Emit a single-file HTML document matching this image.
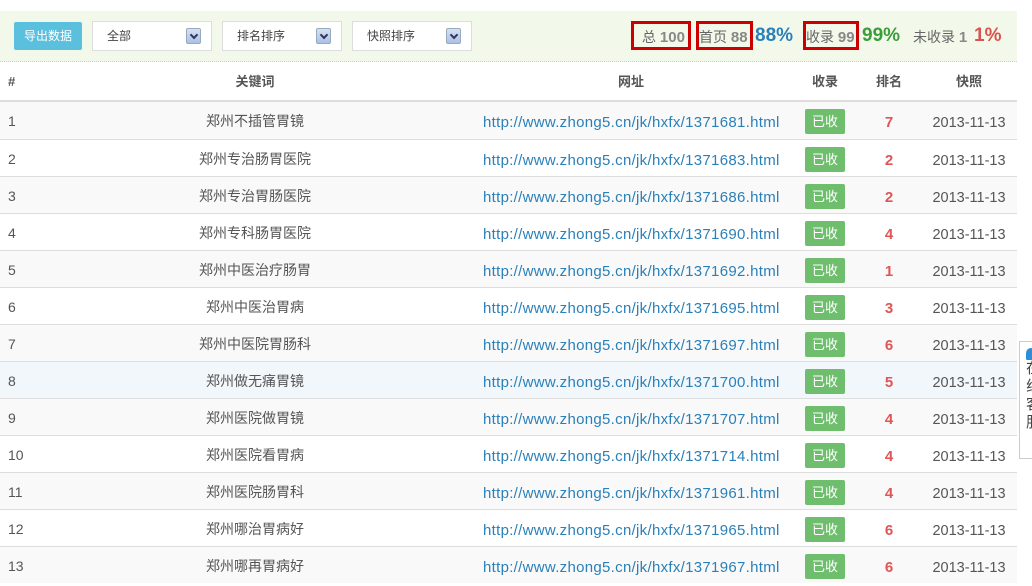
<!DOCTYPE html>
<html><head><meta charset="utf-8"><style>
*{margin:0;padding:0;box-sizing:border-box}
body{width:1032px;height:562px;overflow:hidden;background:#fff;font-family:"Liberation Sans","Noto Sans CJK SC",sans-serif;font-size:14px;color:#555;position:relative}
.bar{position:absolute;left:0;top:11px;width:1017px;height:51px;background:#f3f9ea;border-bottom:1px dotted #ccc}
.btn{position:absolute;left:14px;top:22px;width:68px;height:28px;background:#5bc0de;color:#fff;font-size:12px;line-height:28px;text-align:center;border-radius:2px}
.sel{position:absolute;top:21px;height:30px;width:120px;background:#fff;border:1px solid #ddd;font-size:12px;line-height:28px;color:#444}
.sel i{position:absolute;right:10px;top:6px;width:15px;height:16px;background:linear-gradient(#d5e2f6,#a9c0e8);border:1px solid #9ab;border-radius:2px}
.sel i:after{content:"";position:absolute;left:4px;top:3px;width:4px;height:4px;border-right:2px solid #335;border-bottom:2px solid #335;transform:rotate(45deg)}
.box{position:absolute;border:3px solid #c00;height:29px;top:21px}
.st{position:absolute;top:25px;font-size:14px;line-height:24px;color:#666;white-space:nowrap}
.st b{color:#888;font-size:15px}
.pct{position:absolute;top:23px;font-size:19px;line-height:26px;font-weight:bold}
.row{position:absolute;left:0;width:1017px;height:37px;border-top:1px solid #ddd}
.row span{position:absolute;top:1px;display:block;height:36px;line-height:36px}
.c1{left:8px}
.c2{left:140px;width:230px;text-align:center;font-size:14px}
.row .c3{left:483px;top:3px;color:#2a80b9;font-size:15px;letter-spacing:0.3px}
.row .c4{left:805px;top:7px;width:40px;height:25px;line-height:25px;background:#6ebe6e;color:#fff;text-align:center;border-radius:2px;font-size:13px}
.row .c5{left:874px;top:3px;width:30px;text-align:center;color:#e05555;font-weight:bold;font-size:15px}
.row .c6{left:925px;top:3px;width:88px;text-align:center;font-size:14.5px}
.hd{position:absolute;top:62px;left:0;width:1017px;height:40px;border-bottom:2px solid #ddd;font-weight:bold;font-size:13px;line-height:40px}
.hd span{position:absolute}
</style></head><body>
<div class="bar"></div>
<div class="btn">导出数据</div>
<div class="sel" style="left:92px"><span style="margin-left:14px">全部</span><i></i></div>
<div class="sel" style="left:222px"><span style="margin-left:14px">排名排序</span><i></i></div>
<div class="sel" style="left:352px"><span style="margin-left:14px">快照排序</span><i></i></div>
<div class="box" style="left:631px;width:60px"></div>
<div class="box" style="left:696px;width:57px"></div>
<div class="box" style="left:803px;width:56px"></div>
<div class="st" style="left:642px">总 <b>100</b></div>
<div class="st" style="left:699px">首页 <b>88</b></div>
<span class="pct" style="left:755px;color:#2a80b9">88%</span>
<div class="st" style="left:806px">收录 <b>99</b></div>
<span class="pct" style="left:862px;color:#3a9e3a">99%</span>
<div class="st" style="left:913px">未收录 <b>1</b></div>
<span class="pct" style="left:974px;color:#d9534f">1%</span>
<div class="hd"><span style="left:8px">#</span><span style="left:140px;width:230px;text-align:center">关键词</span><span style="left:605px;width:52px;text-align:center">网址</span><span style="left:805px;width:40px;text-align:center">收录</span><span style="left:874px;width:30px;text-align:center">排名</span><span style="left:925px;width:88px;text-align:center">快照</span></div>
<div class="row" style="top:102px;background:#f9f9f9;border-top:0"><span class="c1">1</span><span class="c2">郑州不插管胃镜</span><span class="c3">http://www.zhong5.cn/jk/hxfx/1371681.html</span><span class="c4">已收</span><span class="c5">7</span><span class="c6">2013-11-13</span></div>
<div class="row" style="top:139px"><span class="c1">2</span><span class="c2">郑州专治肠胃医院</span><span class="c3">http://www.zhong5.cn/jk/hxfx/1371683.html</span><span class="c4">已收</span><span class="c5">2</span><span class="c6">2013-11-13</span></div>
<div class="row" style="top:176px;background:#f9f9f9"><span class="c1">3</span><span class="c2">郑州专治胃肠医院</span><span class="c3">http://www.zhong5.cn/jk/hxfx/1371686.html</span><span class="c4">已收</span><span class="c5">2</span><span class="c6">2013-11-13</span></div>
<div class="row" style="top:213px"><span class="c1">4</span><span class="c2">郑州专科肠胃医院</span><span class="c3">http://www.zhong5.cn/jk/hxfx/1371690.html</span><span class="c4">已收</span><span class="c5">4</span><span class="c6">2013-11-13</span></div>
<div class="row" style="top:250px;background:#f9f9f9"><span class="c1">5</span><span class="c2">郑州中医治疗肠胃</span><span class="c3">http://www.zhong5.cn/jk/hxfx/1371692.html</span><span class="c4">已收</span><span class="c5">1</span><span class="c6">2013-11-13</span></div>
<div class="row" style="top:287px"><span class="c1">6</span><span class="c2">郑州中医治胃病</span><span class="c3">http://www.zhong5.cn/jk/hxfx/1371695.html</span><span class="c4">已收</span><span class="c5">3</span><span class="c6">2013-11-13</span></div>
<div class="row" style="top:324px;background:#f9f9f9"><span class="c1">7</span><span class="c2">郑州中医院胃肠科</span><span class="c3">http://www.zhong5.cn/jk/hxfx/1371697.html</span><span class="c4">已收</span><span class="c5">6</span><span class="c6">2013-11-13</span></div>
<div class="row" style="top:361px;background:#f2f7fc"><span class="c1">8</span><span class="c2">郑州做无痛胃镜</span><span class="c3">http://www.zhong5.cn/jk/hxfx/1371700.html</span><span class="c4">已收</span><span class="c5">5</span><span class="c6">2013-11-13</span></div>
<div class="row" style="top:398px;background:#f9f9f9"><span class="c1">9</span><span class="c2">郑州医院做胃镜</span><span class="c3">http://www.zhong5.cn/jk/hxfx/1371707.html</span><span class="c4">已收</span><span class="c5">4</span><span class="c6">2013-11-13</span></div>
<div class="row" style="top:435px"><span class="c1">10</span><span class="c2">郑州医院看胃病</span><span class="c3">http://www.zhong5.cn/jk/hxfx/1371714.html</span><span class="c4">已收</span><span class="c5">4</span><span class="c6">2013-11-13</span></div>
<div class="row" style="top:472px;background:#f9f9f9"><span class="c1">11</span><span class="c2">郑州医院肠胃科</span><span class="c3">http://www.zhong5.cn/jk/hxfx/1371961.html</span><span class="c4">已收</span><span class="c5">4</span><span class="c6">2013-11-13</span></div>
<div class="row" style="top:509px"><span class="c1">12</span><span class="c2">郑州哪治胃病好</span><span class="c3">http://www.zhong5.cn/jk/hxfx/1371965.html</span><span class="c4">已收</span><span class="c5">6</span><span class="c6">2013-11-13</span></div>
<div class="row" style="top:546px;background:#f9f9f9"><span class="c1">13</span><span class="c2">郑州哪再胃病好</span><span class="c3">http://www.zhong5.cn/jk/hxfx/1371967.html</span><span class="c4">已收</span><span class="c5">6</span><span class="c6">2013-11-13</span></div>
<div style="position:absolute;left:1019px;top:341px;width:20px;height:118px;background:#fff;border:1px solid #ccc;font-size:15px;line-height:18px;padding:18px 0 0 6px;color:#444"><div style="position:absolute;left:6px;top:6px;width:10px;height:12px;background:#2a8fd8;border-radius:6px 6px 2px 2px"></div>在<br>线<br>客<br>服</div>
</body></html>
